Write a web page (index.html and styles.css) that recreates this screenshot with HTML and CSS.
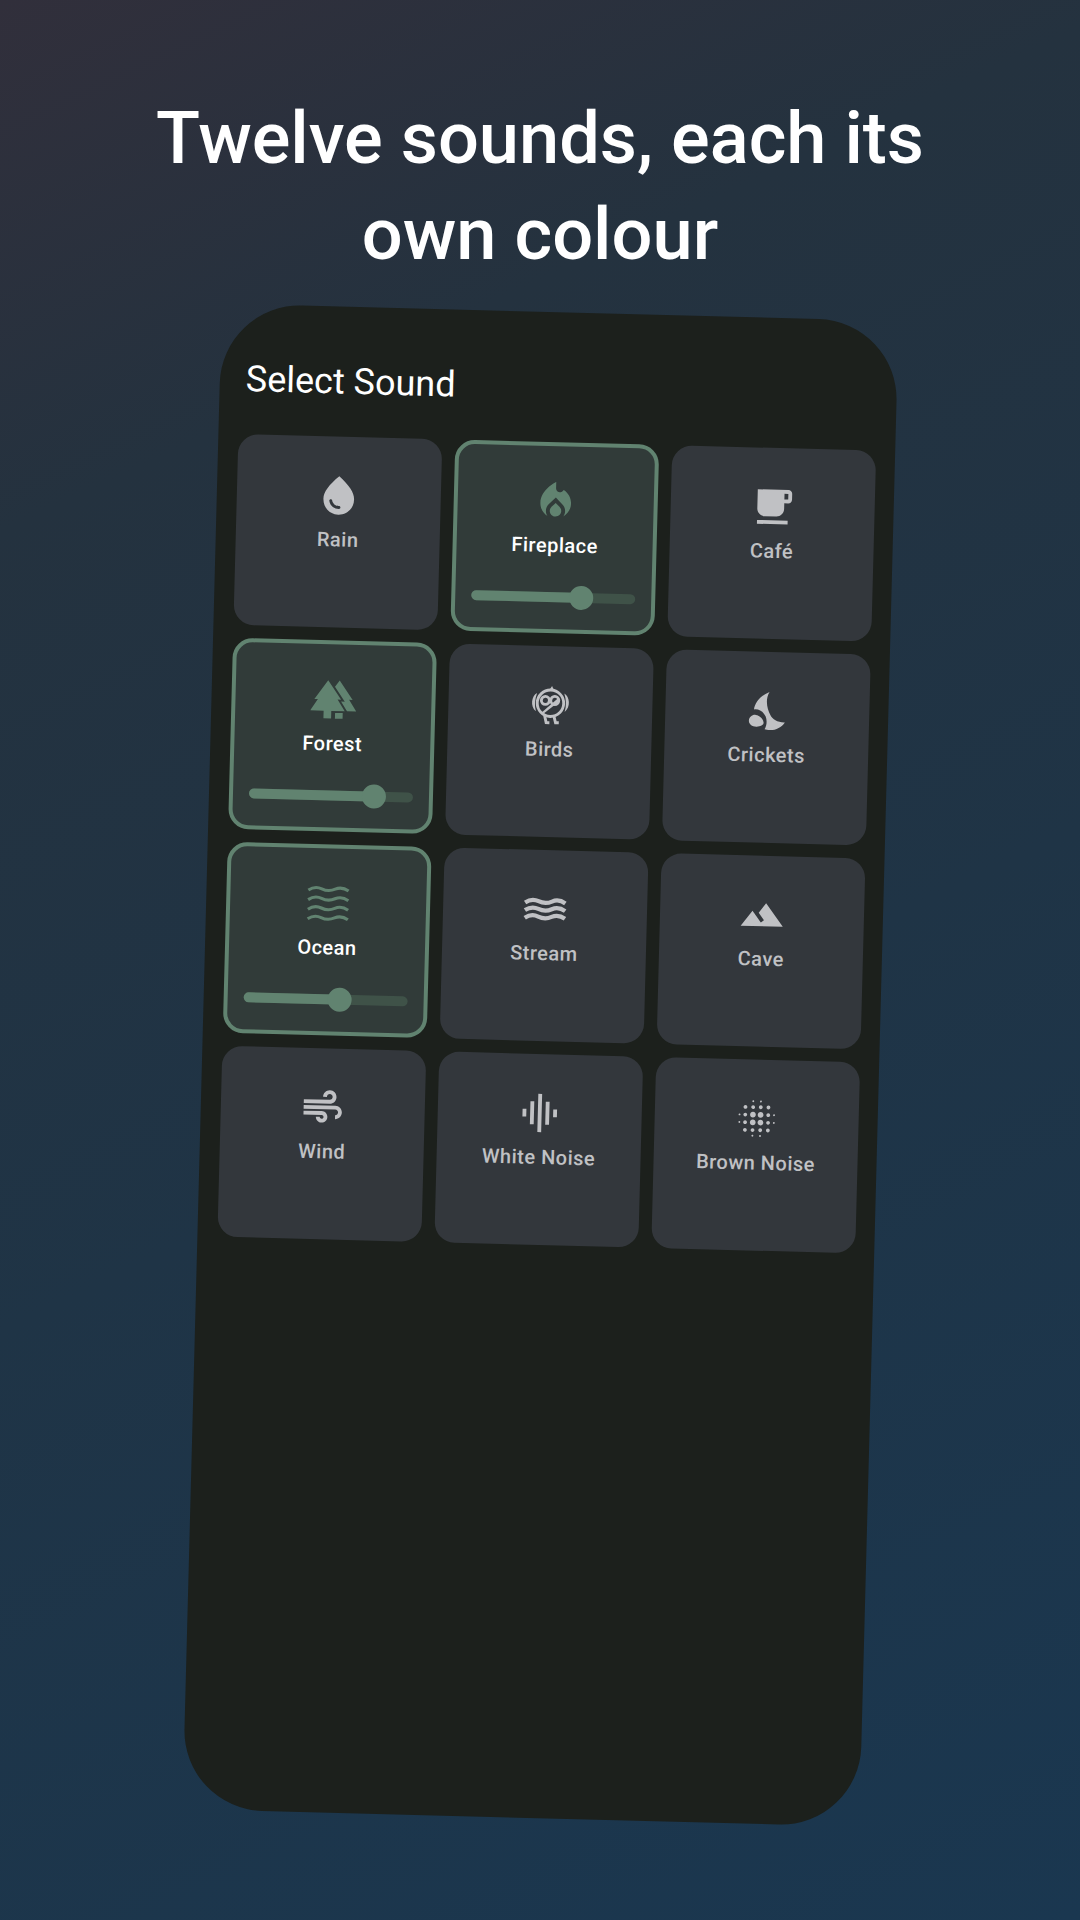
FILE: index.html
```html
<!doctype html>
<html lang="en">
<head>
    <meta charset="utf-8">
    <title>Twelve sounds</title>
    <link rel="stylesheet" href="styles.css">
</head>
<body>
    <h1 class="headline">Twelve sounds, each its<br>own colour</h1>
    <div class="phone">
        <h2 class="sheet-title">Select Sound</h2>
        <div class="sound-grid">
            <div class="sound-card">
                <svg class="sound-icon" viewBox="0 0 24 24"><path fill-rule="evenodd" d="M12 2c-5.330 4.550-8 8.480-8 11.800 0 4.980 3.800 8.200 8 8.200s8-3.220 8-8.200c0-3.320-2.670-7.250-8-11.800zM7.830 14c.37 0 .67.26.74.62.41 2.220 2.280 2.980 3.640 2.870.43-.02.79.32.79.75 0 .4-.32.73-.72.75-2.130.13-4.620-1.090-5.190-4.120-.08-.45.28-.87.74-.87z"/></svg>
                <span class="sound-label">Rain</span>
            </div>
            <div class="sound-card active">
                <svg class="sound-icon" viewBox="0 0 24 24"><path d="M12 12.900l-2.130 2.090C9.310 15.550 9 16.280 9 17.060 9 18.680 10.350 20 12 20s3-1.320 3-2.940c0-.78-.31-1.520-.87-2.070L12 12.900z"/><path d="M16 6l-.44.55C14.380 8.020 12 7.190 12 5.300V2S4 6 4 13c0 2.920 1.560 5.470 3.890 6.860-.56-.79-.89-1.760-.89-2.800 0-1.320.52-2.560 1.470-3.500L12 10.100l3.530 3.470c.95.93 1.470 2.170 1.470 3.500 0 1.020-.31 1.960-.85 2.750 1.890-1.150 3.290-3.060 3.710-5.300.66-3.550-1.070-6.900-3.860-8.520z"/></svg>
                <span class="sound-label">Fireplace</span>
                <div class="slider"><div class="slider-fill" style="width: 67%"></div><div class="slider-thumb"></div></div>
            </div>
            <div class="sound-card">
                <svg class="sound-icon" viewBox="0 0 24 24"><path d="M20 3H4v10c0 2.210 1.790 4 4 4h6c2.210 0 4-1.790 4-4v-3h2c1.110 0 2-.9 2-2V5c0-1.110-.89-2-2-2zm0 5h-2V5h2v3zM4 19h16v2H4z"/></svg>
                <span class="sound-label">Café</span>
            </div>
            <div class="sound-card active">
                <svg class="sound-icon" viewBox="0 0 24 24"><path d="M16 12 9 2 2 12h1.860L0 18h7v4h4v-4h7l-3.860-6z"/><path d="M20.140 12H22L15 2l-2.390 3.410L17.920 13h-1.950l3.220 5H24zM13 19h4v3h-4z"/></svg>
                <span class="sound-label">Forest</span>
                <div class="slider"><div class="slider-fill" style="width: 76%"></div><div class="slider-thumb"></div></div>
            </div>
            <div class="sound-card">
                <svg class="sound-icon" viewBox="0 0 24 24"><g class="line-art" stroke-width="1.500"><circle cx="12" cy="11" r="6.900"/><circle cx="9.300" cy="9.600" r="2.100"/><circle cx="14.200" cy="9.500" r="2.100"/><path d="M9.100 17.500 10 21.200h1.700M14 17.800l.9 3.300h1.700"/></g><path d="M7.400 16.100 15.700 8.500l1 1.300-8.600 7z"/><path d="M4.900 5.800C2 7.300 1.300 12.800 4.500 15.400c-.9-3.100-.7-6.400.4-9.600zM19.100 5.800c2.900 1.500 3.600 7 .4 9.600.9-3.100.7-6.400-.4-9.600zM11.200 4.200 12.600 2l1.100 2.300z"/></svg>
                <span class="sound-label">Birds</span>
            </div>
            <div class="sound-card">
                <svg class="sound-icon" viewBox="0 0 24 24"><path d="M12.900 2.100C8.500 4 5.500 7.500 5 11.500 7.500 11 10 12.500 11.200 15 12 17 12 19.500 10.800 21.700 11.500 22 12.500 22 13.500 22 16.800 22 19.600 20.400 21.300 17.800 17.500 18 14.800 16.500 13.700 14.300 11.800 11 10.600 6 12.900 2.100z"/><path d="M2.500 17.400C2.500 15.500 4.300 14.100 6 14.300 8.200 14.500 10 16.300 10.200 18.200 10.300 19.800 8.300 20.400 6.500 20.400 4.200 20.400 2.500 19.200 2.500 17.400z"/></svg>
                <span class="sound-label">Crickets</span>
            </div>
            <div class="sound-card active">
                <svg class="sound-icon" viewBox="0 0 24 24"><g class="line-art" stroke-width="1.600"><path d="M1.500 5.300Q5 2.900 8.500 4.500T15.500 4.500T22.500 5.300"/><path d="M1.500 10.300Q5 7.900 8.500 9.500T15.500 9.500T22.500 10.300"/><path d="M1.500 15.300Q5 12.900 8.500 14.500T15.500 14.500T22.500 15.300"/><path d="M1.500 20.300Q5 17.900 8.500 19.500T15.500 19.500T22.500 20.300"/></g></svg>
                <span class="sound-label">Ocean</span>
                <div class="slider"><div class="slider-fill" style="width: 58.5%"></div><div class="slider-thumb"></div></div>
            </div>
            <div class="sound-card">
                <svg class="sound-icon" viewBox="0 0 24 24"><g class="line-art" stroke-width="2.200"><path d="M1.500 8.800Q5 6.400 8.500 8T15.500 8T22.500 8.800"/><path d="M1.500 12.800Q5 10.400 8.500 12T15.500 12T22.500 12.800"/><path d="M1.500 16.800Q5 14.400 8.500 16T15.500 16T22.500 16.800"/></g></svg>
                <span class="sound-label">Stream</span>
            </div>
            <div class="sound-card">
                <svg class="sound-icon" viewBox="0 0 24 24"><path d="M14 6l-3.750 5 2.850 3.800-1.600 1.200C9.810 13.750 7 10 7 10l-6 8h22L14 6z"/></svg>
                <span class="sound-label">Cave</span>
            </div>
            <div class="sound-card">
                <svg class="sound-icon" viewBox="0 0 24 24"><path d="M14.500 17c0 1.650-1.350 3-3 3s-3-1.350-3-3h2c0 .55.45 1 1 1s1-.45 1-1-.45-1-1-1H2v-2h9.500c1.650 0 3 1.350 3 3zM19 6.500C19 4.570 17.430 3 15.500 3S12 4.570 12 6.500h2c0-.83.67-1.500 1.500-1.500s1.500.67 1.500 1.500S16.330 8 15.500 8H2v2h13.500c1.930 0 3.500-1.570 3.500-3.500zm-.5 4.500H2v2h16.500c.83 0 1.500.67 1.500 1.500s-.67 1.500-1.500 1.500v2c1.930 0 3.500-1.570 3.500-3.500S20.430 11 18.500 11z"/></svg>
                <span class="sound-label">Wind</span>
            </div>
            <div class="sound-card">
                <svg class="sound-icon" viewBox="0 0 24 24"><path d="M7 18h2V6H7v12zm4 4h2V2h-2v20zm-8-8h2v-4H3v4zm12 4h2V6h-2v12zm4-8v4h2v-4h-2z"/></svg>
                <span class="sound-label">White Noise</span>
            </div>
            <div class="sound-card">
                <svg class="sound-icon" viewBox="0 0 24 24"><path d="M6 13c-.55 0-1 .45-1 1s.45 1 1 1 1-.45 1-1-.45-1-1-1zm0 4c-.55 0-1 .45-1 1s.45 1 1 1 1-.45 1-1-.45-1-1-1zm0-8c-.55 0-1 .45-1 1s.45 1 1 1 1-.45 1-1-.45-1-1-1zm-3 .5c-.28 0-.5.22-.5.5s.22.5.5.5.5-.22.5-.5-.22-.5-.5-.5zM6 5c-.55 0-1 .45-1 1s.45 1 1 1 1-.45 1-1-.45-1-1-1zm15 5.500c.28 0 .5-.22.5-.5s-.22-.5-.5-.5-.5.22-.5.5.22.5.5.5zM14 7c.55 0 1-.45 1-1s-.45-1-1-1-1 .45-1 1 .45 1 1 1zm0-3.500c.28 0 .5-.22.5-.5s-.22-.5-.5-.5-.5.22-.5.5.22.5.5.5zm-11 10c-.28 0-.5.22-.5.5s.22.5.5.5.5-.22.5-.5-.22-.5-.5-.5zm7 7c-.28 0-.5.22-.5.5s.22.5.5.5.5-.22.5-.5-.22-.5-.5-.5zm0-17c.28 0 .5-.22.5-.5s-.22-.5-.5-.5-.5.22-.5.5.22.5.5.5zM10 7c.55 0 1-.45 1-1s-.45-1-1-1-1 .45-1 1 .45 1 1 1zm0 5.500c-.83 0-1.500.67-1.500 1.500s.67 1.500 1.500 1.500 1.500-.67 1.500-1.500-.67-1.500-1.500-1.500zm8 .5c-.55 0-1 .45-1 1s.45 1 1 1 1-.45 1-1-.45-1-1-1zm0 4c-.55 0-1 .45-1 1s.45 1 1 1 1-.45 1-1-.45-1-1-1zm0-8c-.55 0-1 .45-1 1s.45 1 1 1 1-.45 1-1-.45-1-1-1zm0-4c-.55 0-1 .45-1 1s.45 1 1 1 1-.45 1-1-.45-1-1-1zm3 8.500c-.28 0-.5.22-.5.5s.22.5.5.5.5-.22.5-.5-.22-.5-.5-.5zM14 17c-.55 0-1 .45-1 1s.45 1 1 1 1-.45 1-1-.45-1-1-1zm0 3.500c-.28 0-.5.22-.5.5s.22.5.5.5.5-.22.5-.5-.22-.5-.5-.5zm-4-12c-.83 0-1.500.67-1.500 1.500s.67 1.500 1.500 1.500 1.500-.67 1.500-1.500-.67-1.500-1.500-1.500zm0 8.500c-.55 0-1 .45-1 1s.45 1 1 1 1-.45 1-1-.45-1-1-1zm4-4.500c-.83 0-1.500.67-1.500 1.500s.67 1.500 1.500 1.500 1.500-.67 1.500-1.500-.67-1.500-1.500-1.500zm0-4c-.83 0-1.500.67-1.500 1.500s.67 1.500 1.500 1.500 1.500-.67 1.500-1.500-.67-1.500-1.500-1.500z"/></svg>
                <span class="sound-label">Brown Noise</span>
            </div>
        </div>
    </div>
</body>
</html>
```

FILE: styles.css
```css
html, body {
    margin: 0;
    padding: 0;
}
body {
    width: 1080px;
    height: 1920px;
    overflow: hidden;
    font-family: Roboto, sans-serif;
    background: linear-gradient(155deg, #312f3b 0%, #24323f 22%, #1f3446 55%, #1a3750 100%);
}
.headline {
    margin: 0;
    padding-top: 91px;
    font-size: 72.2px;
    line-height: 96px;
    font-weight: 500;
    color: #fff;
    text-align: center;
}
.phone {
    box-sizing: border-box;
    width: 677px;
    height: 1506px;
    margin: 29px 0 0 202px;
    padding: 0 20px;
    border-radius: 80px;
    background: #1c201c;
    transform: rotate(1.5deg);
}
.sheet-title {
    margin: 0;
    padding: 53px 0 0 6px;
    height: 130px;
    box-sizing: border-box;
    font-size: 36px;
    line-height: 44px;
    font-weight: 400;
    color: #fff;
}
.sound-grid {
    display: grid;
    grid-template-columns: repeat(3, 204px);
    grid-auto-rows: 191px;
    gap: 13px;
}
.sound-card {
    box-sizing: border-box;
    display: flex;
    flex-direction: column;
    align-items: center;
    padding: 36px 20px 0;
    border-radius: 20px;
    background: #33373c;
    color: #c0c1c4;
}
.sound-card.active {
    padding: 32px 16px 0;
    border: 4px solid #618370;
    background: #313b39;
    color: #618370;
}
.sound-icon {
    display: block;
    width: 46px;
    height: 46px;
    fill: currentColor;
}
.line-art {
    fill: none;
    stroke: currentColor;
}
.sound-label {
    margin-top: 7px;
    font-size: 20px;
    line-height: 28px;
    font-weight: 500;
    letter-spacing: 0.5px;
}
.active .sound-label {
    color: #fff;
}
.slider {
    position: relative;
    display: flex;
    align-self: stretch;
    height: 10px;
    margin-top: 33px;
    border-radius: 5px;
    background: #3f5248;
}
.slider-fill {
    height: 100%;
    border-radius: 5px;
    background: #618370;
}
.slider-thumb {
    width: 24px;
    height: 24px;
    margin: -7px 0 0 -12px;
    border-radius: 50%;
    background: #618370;
    flex: none;
}
```
